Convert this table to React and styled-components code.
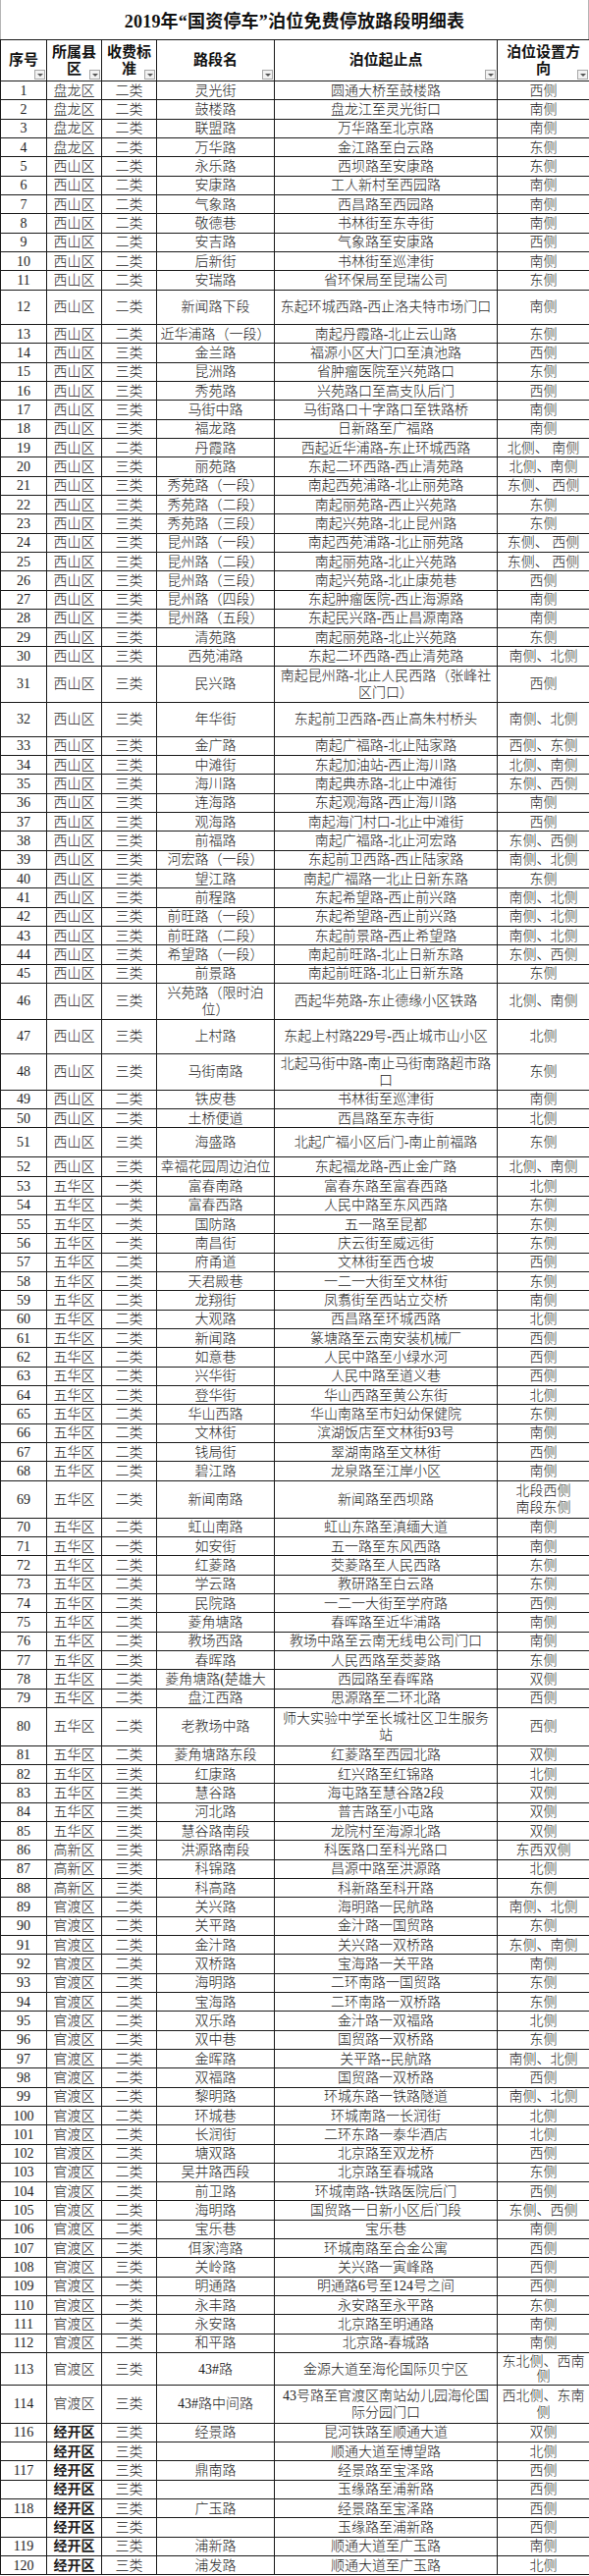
import React from 'react'
import styled, { createGlobalStyle } from 'styled-components';

const GlobalStyle = createGlobalStyle`
  html, body {
    margin: 0;
    padding: 0;
    background: #fff;
  }
  body {
    font-family: "Liberation Serif", "Noto Sans CJK SC", serif;
    color: #111;
  }
`;

const Page = styled.div`
  width: 600px;
  background: #fff;
`;

const Title = styled.div`
  height: 40px;
  display: flex;
  align-items: center;
  justify-content: center;
  border-left: 1px solid #b5b5b5;
  border-right: 1px solid #b5b5b5;
  box-sizing: border-box;
  font-size: 18px;
  font-weight: bold;
  letter-spacing: 0.2px;
  color: #111;
`;

const Table = styled.table`
  width: 600px;
  table-layout: fixed;
  border-collapse: collapse;
`;

const Col = styled.col`
  width: ${p => p.$w}px;
`;

const HeadRow = styled.tr`
  height: 42px;
`;

const Th = styled.th`
  position: relative;
  border: 1px solid #1a1a1a;
  padding: 0 2px;
  font-size: 15px;
  line-height: 17px;
  font-weight: bold;
  text-align: center;
  vertical-align: middle;
  white-space: pre-line;
  color: #111;
`;

const Filter = styled.span`
  position: absolute;
  right: 1px;
  bottom: 1px;
  width: 11px;
  height: 10px;
  box-sizing: border-box;
  border: 1px solid #a8a8a8;
  background: #f2f2f2;
  &::after {
    content: "";
    position: absolute;
    left: 2px;
    top: 3px;
    border-left: 3px solid transparent;
    border-right: 3px solid transparent;
    border-top: 3px solid #555;
  }
`;

const Row = styled.tr`
  height: ${p => p.$h}px;
`;

const Td = styled.td`
  border: 1px solid #1a1a1a;
  padding: 0 2px;
  font-size: 14px;
  line-height: ${p => (p.$tight ? 15 : 17)}px;
  font-weight: ${p => (p.$bold ? 'bold' : 300)};
  text-align: center;
  vertical-align: middle;
  white-space: pre-line;
  overflow: hidden;
  color: #1c1c1c;
`;

const widths = [47, 56, 56, 120, 227, 94];

const headers = ['序号', '所属县\n区', '收费标\n准', '路段名', '泊位起止点', '泊位设置方\n向'];

// [序号, 区, 类, 路段名, 起止点, 方向, 行高]
const rows = [
  ['1', '盘龙区', '二类', '灵光街', '圆通大桥至鼓楼路', '西侧'],
  ['2', '盘龙区', '二类', '鼓楼路', '盘龙江至灵光街口', '南侧'],
  ['3', '盘龙区', '二类', '联盟路', '万华路至北京路', '南侧'],
  ['4', '盘龙区', '二类', '万华路', '金江路至白云路', '东侧'],
  ['5', '西山区', '二类', '永乐路', '西坝路至安康路', '东侧'],
  ['6', '西山区', '二类', '安康路', '工人新村至西园路', '南侧'],
  ['7', '西山区', '二类', '气象路', '西昌路至西园路', '南侧'],
  ['8', '西山区', '二类', '敬德巷', '书林街至东寺街', '南侧'],
  ['9', '西山区', '二类', '安吉路', '气象路至安康路', '西侧'],
  ['10', '西山区', '二类', '后新街', '书林街至巡津街', '南侧'],
  ['11', '西山区', '二类', '安瑞路', '省环保局至昆瑞公司', '东侧'],
  ['12', '西山区', '二类', '新闻路下段', '东起环城西路-西止洛夫特市场门口', '南侧', 35.3],
  ['13', '西山区', '二类', '近华浦路（一段）', '南起丹霞路-北止云山路', '东侧'],
  ['14', '西山区', '三类', '金兰路', '福源小区大门口至滇池路', '西侧'],
  ['15', '西山区', '三类', '昆洲路', '省肿瘤医院至兴苑路口', '东侧'],
  ['16', '西山区', '三类', '秀苑路', '兴苑路口至高支队后门', '西侧'],
  ['17', '西山区', '三类', '马街中路', '马街路口十字路口至铁路桥', '南侧'],
  ['18', '西山区', '三类', '福龙路', '日新路至广福路', '南侧'],
  ['19', '西山区', '二类', '丹霞路', '西起近华浦路-东止环城西路', '北侧、 南侧'],
  ['20', '西山区', '三类', '丽苑路', '东起二环西路-西止清苑路', '北侧、南侧'],
  ['21', '西山区', '三类', '秀苑路（一段）', '南起西苑浦路-北止丽苑路', '东侧、 西侧'],
  ['22', '西山区', '三类', '秀苑路（二段）', '南起丽苑路-西止兴苑路', '东侧'],
  ['23', '西山区', '三类', '秀苑路（三段）', '南起兴苑路-北止昆州路', '东侧'],
  ['24', '西山区', '三类', '昆州路（一段）', '南起西苑浦路-北止丽苑路', '东侧、 西侧'],
  ['25', '西山区', '三类', '昆州路（二段）', '南起丽苑路-北止兴苑路', '东侧、 西侧'],
  ['26', '西山区', '三类', '昆州路（三段）', '南起兴苑路-北止康苑巷', '西侧'],
  ['27', '西山区', '三类', '昆州路（四段）', '东起肿瘤医院-西止海源路', '南侧'],
  ['28', '西山区', '三类', '昆州路（五段）', '东起民兴路-西止昌源南路', '南侧'],
  ['29', '西山区', '三类', '清苑路', '南起丽苑路-北止兴苑路', '东侧'],
  ['30', '西山区', '三类', '西苑浦路', '东起二环西路-西止清苑路', '南侧、北侧'],
  ['31', '西山区', '三类', '民兴路', '南起昆州路-北止人民西路（张峰社\n区门口）', '西侧', 36.7],
  ['32', '西山区', '三类', '年华街', '东起前卫西路-西止高朱村桥头', '南侧、北侧', 35.3],
  ['33', '西山区', '三类', '金广路', '南起广福路-北止陆家路', '西侧、东侧'],
  ['34', '西山区', '三类', '中滩街', '东起加油站-西止海川路', '北侧、南侧'],
  ['35', '西山区', '三类', '海川路', '南起典赤路-北止中滩街', '东侧、西侧'],
  ['36', '西山区', '三类', '连海路', '东起观海路-西止海川路', '南侧'],
  ['37', '西山区', '三类', '观海路', '南起海门村口-北止中滩街', '西侧'],
  ['38', '西山区', '三类', '前福路', '南起广福路-北止河宏路', '东侧、西侧'],
  ['39', '西山区', '三类', '河宏路（一段）', '东起前卫西路-西止陆家路', '南侧、北侧'],
  ['40', '西山区', '三类', '望江路', '南起广福路一北止日新东路', '东侧'],
  ['41', '西山区', '三类', '前程路', '东起希望路-西止前兴路', '南侧、北侧'],
  ['42', '西山区', '三类', '前旺路（一段）', '东起希望路-西止前兴路', '南侧、北侧'],
  ['43', '西山区', '三类', '前旺路（二段）', '东起前景路-西止希望路', '南侧、北侧'],
  ['44', '西山区', '三类', '希望路（一段）', '南起前旺路-北止日新东路', '东侧、西侧'],
  ['45', '西山区', '三类', '前景路', '南起前旺路-北止日新东路', '东侧'],
  ['46', '西山区', '三类', '兴苑路（限时泊\n位）', '西起华苑路-东止德缘小区铁路', '北侧、南侧', 36.7],
  ['47', '西山区', '三类', '上村路', '东起上村路229号-西止城市山小区', '北侧', 35.3],
  ['48', '西山区', '三类', '马街南路', '北起马街中路-南止马街南路超市路\n口', '东侧', 36.7],
  ['49', '西山区', '二类', '铁皮巷', '书林街至巡津街', '南侧'],
  ['50', '西山区', '二类', '土桥便道', '西昌路至东寺街', '北侧'],
  ['51', '西山区', '三类', '海盛路', '北起广福小区后门-南止前福路', '东侧', 30],
  ['52', '西山区', '三类', '幸福花园周边泊位', '东起福龙路-西止金广路', '北侧、南侧', 20],
  ['53', '五华区', '一类', '富春南路', '富春东路至富春西路', '北侧'],
  ['54', '五华区', '一类', '富春西路', '人民中路至东风西路', '东侧'],
  ['55', '五华区', '一类', '国防路', '五一路至昆都', '东侧'],
  ['56', '五华区', '一类', '南昌街', '庆云街至威远街', '东侧'],
  ['57', '五华区', '二类', '府甬道', '文林街至西仓坡', '西侧'],
  ['58', '五华区', '二类', '天君殿巷', '一二一大街至文林街', '东侧'],
  ['59', '五华区', '二类', '龙翔街', '凤翥街至西站立交桥', '南侧'],
  ['60', '五华区', '二类', '大观路', '西昌路至环城西路', '北侧'],
  ['61', '五华区', '二类', '新闻路', '篆塘路至云南安装机械厂', '西侧'],
  ['62', '五华区', '二类', '如意巷', '人民中路至小绿水河', '西侧'],
  ['63', '五华区', '二类', '兴华街', '人民中路至道义巷', '西侧'],
  ['64', '五华区', '二类', '登华街', '华山西路至黄公东街', '北侧'],
  ['65', '五华区', '二类', '华山西路', '华山南路至市妇幼保健院', '东侧'],
  ['66', '五华区', '二类', '文林街', '滨湖饭店至文林街93号', '南侧'],
  ['67', '五华区', '二类', '钱局街', '翠湖南路至文林街', '西侧'],
  ['68', '五华区', '二类', '碧江路', '龙泉路至江岸小区', '南侧'],
  ['69', '五华区', '二类', '新闻南路', '新闻路至西坝路', '北段西侧\n南段东侧', 38],
  ['70', '五华区', '二类', '虹山南路', '虹山东路至滇缅大道', '南侧'],
  ['71', '五华区', '一类', '如安街', '五一路至东风西路', '南侧'],
  ['72', '五华区', '二类', '红菱路', '茭菱路至人民西路', '东侧'],
  ['73', '五华区', '二类', '学云路', '教研路至白云路', '东侧'],
  ['74', '五华区', '二类', '民院路', '一二一大街至学府路', '西侧'],
  ['75', '五华区', '二类', '菱角塘路', '春晖路至近华浦路', '南侧'],
  ['76', '五华区', '二类', '教场西路', '教场中路至云南无线电公司门口', '南侧'],
  ['77', '五华区', '二类', '春晖路', '人民西路至茭菱路', '东侧'],
  ['78', '五华区', '二类', '菱角塘路(楚雄大', '西园路至春晖路', '双侧'],
  ['79', '五华区', '二类', '盘江西路', '思源路至二环北路', '西侧'],
  ['80', '五华区', '二类', '老教场中路', '师大实验中学至长城社区卫生服务\n站', '西侧', 38.7],
  ['81', '五华区', '二类', '菱角塘路东段', '红菱路至西园北路', '双侧'],
  ['82', '五华区', '三类', '红康路', '红兴路至红锦路', '北侧'],
  ['83', '五华区', '三类', '慧谷路', '海屯路至慧谷路2段', '双侧'],
  ['84', '五华区', '三类', '河北路', '普吉路至小屯路', '双侧'],
  ['85', '五华区', '三类', '慧谷路南段', '龙院村至海源北路', '双侧'],
  ['86', '高新区', '三类', '洪源路南段', '科医路口至科光路口', '东西双侧'],
  ['87', '高新区', '三类', '科锦路', '昌源中路至洪源路', '北侧'],
  ['88', '高新区', '三类', '科高路', '科新路至科开路', '东侧'],
  ['89', '官渡区', '二类', '关兴路', '海明路一民航路', '南侧、北侧'],
  ['90', '官渡区', '二类', '关平路', '金汁路一国贸路', '东侧'],
  ['91', '官渡区', '二类', '金汁路', '关兴路一双桥路', '东侧、南侧'],
  ['92', '官渡区', '二类', '双桥路', '宝海路一关平路', '南侧'],
  ['93', '官渡区', '二类', '海明路', '二环南路一国贸路', '东侧'],
  ['94', '官渡区', '二类', '宝海路', '二环南路一双桥路', '东侧'],
  ['95', '官渡区', '二类', '双乐路', '金汁路一双福路', '北侧'],
  ['96', '官渡区', '二类', '双中巷', '国贸路一双桥路', '东侧'],
  ['97', '官渡区', '二类', '金晖路', '关平路--民航路', '南侧、北侧'],
  ['98', '官渡区', '二类', '双福路', '国贸路一双桥路', '西侧'],
  ['99', '官渡区', '二类', '黎明路', '环城东路一铁路隧道', '南侧、北侧'],
  ['100', '官渡区', '二类', '环城巷', '环城南路一长润街', '北侧'],
  ['101', '官渡区', '二类', '长润街', '二环东路一泰华酒店', '北侧'],
  ['102', '官渡区', '二类', '塘双路', '北京路至双龙桥', '西侧'],
  ['103', '官渡区', '二类', '吴井路西段', '北京路至春城路', '东侧'],
  ['104', '官渡区', '二类', '前卫路', '环城南路-铁路医院后门', '西侧'],
  ['105', '官渡区', '二类', '海明路', '国贸路一日新小区后门段', '东侧、西侧'],
  ['106', '官渡区', '二类', '宝乐巷', '宝乐巷', '南侧'],
  ['107', '官渡区', '二类', '佴家湾路', '环城南路至合金公寓', '西侧'],
  ['108', '官渡区', '三类', '关岭路', '关兴路一寅峰路', '西侧'],
  ['109', '官渡区', '一类', '明通路', '明通路6号至124号之间', '西侧'],
  ['110', '官渡区', '一类', '永丰路', '永安路至永平路', '东侧'],
  ['111', '官渡区', '一类', '永安路', '北京路至明通路', '南侧'],
  ['112', '官渡区', '二类', '和平路', '北京路-春城路', '南侧'],
  ['113', '官渡区', '三类', '43#路', '金源大道至海伦国际贝宁区', '东北侧、西南\n侧', 33],
  ['114', '官渡区', '三类', '43#路中间路', '43号路至官渡区南站幼儿园海伦国\n际分园门口', '西北侧、东南\n侧', 38.7],
  ['116', '经开区', '三类', '经景路', '昆河铁路至顺通大道', '双侧'],
  ['', '经开区', '三类', '', '顺通大道至博望路', '北侧'],
  ['117', '经开区', '三类', '鼎南路', '经景路至宝泽路', '西侧'],
  ['', '经开区', '三类', '', '玉缘路至浦新路', '西侧'],
  ['118', '经开区', '三类', '广玉路', '经景路至宝泽路', '西侧'],
  ['', '经开区', '三类', '', '玉缘路至浦新路', '西侧'],
  ['119', '经开区', '三类', '浦新路', '顺通大道至广玉路', '南侧'],
  ['120', '经开区', '三类', '浦发路', '顺通大道至广玉路', '北侧'],
];

export default function App() {
  return (
    <Page>
      <GlobalStyle />
      <Title>2019年“国资停车”泊位免费停放路段明细表</Title>
      <Table>
        <colgroup>
          {widths.map((w, i) => <Col key={i} $w={w} />)}
        </colgroup>
        <thead>
          <HeadRow>
            {headers.map((h, i) => (
              <Th key={i}>
                {h}
                <Filter />
              </Th>
            ))}
          </HeadRow>
        </thead>
        <tbody>
          {rows.map((r, i) => {
            const [no, district, level, road, range, side, h] = r;
            const bold = district === '经开区';
            return (
              <Row key={i} $h={h || 19.33}>
                <Td>{no}</Td>
                <Td $bold={bold}>{district}</Td>
                <Td>{level}</Td>
                <Td $tight={h && h < 36}>{road}</Td>
                <Td $tight={h && h < 36}>{range}</Td>
                <Td $tight={h && h < 36}>{side}</Td>
              </Row>
            );
          })}
        </tbody>
      </Table>
    </Page>
  )
}
